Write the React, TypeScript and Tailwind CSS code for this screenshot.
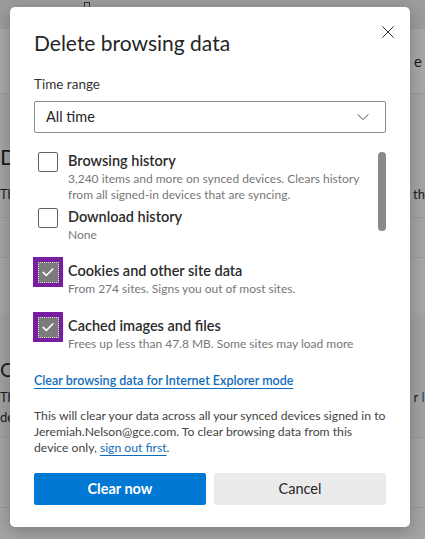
import React from "react";

// ============================================================================
// Delete browsing data dialog (over a dimmed settings page)
// ============================================================================

const font = { fontFamily: 'Lato, "Noto Sans", sans-serif' };

function CheckIcon() {
  return (
    <svg viewBox="0 0 16 16" className="w-[16px] h-[16px]" fill="none">
      <path d="M3.2 8.4l3.1 3.1L12.8 5" stroke="white" strokeWidth="1.7" strokeLinecap="round" strokeLinejoin="round" />
    </svg>
  );
}

interface OptionProps {
  title: string;
  desc: string[];
  checked?: boolean;
}

function Option({ title, desc, checked }: OptionProps) {
  return (
    <div className="flex items-start">
      {checked ? (
        <div className="w-[30px] h-[30px] -ml-[5px] -mt-[4px] mr-[5px] bg-[#7a1ea1] flex items-center justify-center shrink-0">
          <div className="w-[21px] h-[21px] bg-[#7b7b7b] border border-dotted border-[#d8d8d8] flex items-center justify-center">
            <CheckIcon />
          </div>
        </div>
      ) : (
        <div className="w-[20px] h-[20px] mt-[1px] mr-[10px] border border-[#616161] rounded-[2px] bg-white shrink-0" />
      )}
      <div className="flex flex-col">
        <div className="text-[14.5px] leading-[20px] font-semibold text-[#2b2b2b]">{title}</div>
        {desc.map((d) => (
          <div key={d} className="text-[12px] leading-[16px] text-[#777] whitespace-nowrap">
            {d}
          </div>
        ))}
      </div>
    </div>
  );
}

function BackgroundPage() {
  return (
    <div className="absolute inset-0 bg-[#a4a4a4] text-[#1b1b1b]">
      <div className="h-[29px] bg-[#9c9c9c] relative">
        <div className="absolute left-[84px] top-[2px] w-[6px] h-[7px] border border-[#333]" />
      </div>
      <div className="h-[65px] bg-[#a7a7a7] border-b border-[#989898] flex items-center justify-end pr-[3px] text-[15px]">
        e
      </div>
      <div className="h-[124px] border-b border-[#9a9a9a] relative">
        <div className="absolute left-[0px] top-[50px] text-[22px] leading-[26px]">D</div>
        <div className="absolute left-[0px] top-[91px] text-[13px]">Th</div>
        <div className="absolute right-[0px] top-[91px] text-[13px]">th</div>
      </div>
      <div className="h-[40px] border-b border-[#9a9a9a]" />
      <div className="h-[55px] bg-[#a6a6a6]" />
      <div className="h-[125px] bg-[#a1a1a1] border-b border-[#979797] relative">
        <div className="absolute left-[0px] top-[44px] text-[20px] leading-[24px]">
          C<span className="text-[#6b2a1a]">l</span>
        </div>
        <div className="absolute left-[0px] top-[75px] text-[13px]">Th</div>
        <div className="absolute left-[0px] top-[95px] text-[13px]">de</div>
        <div className="absolute right-[0px] top-[75px] text-[13px]">
          r <span className="text-[#1d4f7a]">I</span>
        </div>
      </div>
      <div className="h-[70px] border-b border-[#979797]" />
    </div>
  );
}

export default function App() {
  return (
    <div className="relative w-[425px] h-[539px] overflow-hidden" style={font}>
      <BackgroundPage />

      <div className="absolute left-[10px] top-[7px] w-[400px] h-[520px] bg-white rounded-[5px] shadow-[0_4px_16px_rgba(0,0,0,0.25)] flex flex-col px-[24px]">
        {/* Close */}
        <button className="absolute right-[14px] top-[17px] w-[16px] h-[16px] flex items-center justify-center">
          <svg viewBox="0 0 16 16" className="w-[14px] h-[14px]" fill="none">
            <path d="M1.5 1.5l13 13M14.5 1.5l-13 13" stroke="#333" strokeWidth="1.1" />
          </svg>
        </button>

        {/* Title */}
        <h2 className="mt-[22px] text-[21px] leading-[28px] text-[#262626] font-normal">Delete browsing data</h2>

        {/* Time range */}
        <div className="mt-[18px] text-[13.5px] leading-[18px] text-[#333]">Time range</div>
        <div className="mt-[8px] h-[32px] border border-[#8d8d8d] rounded-[2px] flex items-center justify-between pl-[11px] pr-[15px]">
          <span className="text-[14.5px] text-[#262626]">All time</span>
          <svg viewBox="0 0 16 16" className="w-[14px] h-[14px]" fill="none">
            <path d="M2 5l6 6 6-6" stroke="#444" strokeWidth="1.1" />
          </svg>
        </div>

        {/* Options list */}
        <div className="mt-[18px] relative">
          <div className="absolute right-[0px] top-[1px] w-[8px] h-[79px] rounded-full bg-[#8a8a8a]" />
          <div className="flex flex-col pl-[4px] pr-[20px]">
            <Option
              title="Browsing history"
              desc={["3,240 items and more on synced devices. Clears history", "from all signed-in devices that are syncing."]}
            />
            <div className="h-[4px]" />
            <Option title="Download history" desc={["None"]} />
            <div className="h-[18px]" />
            <Option checked title="Cookies and other site data" desc={["From 274 sites. Signs you out of most sites."]} />
            <div className="h-[19px]" />
            <Option checked title="Cached images and files" desc={["Frees up less than 47.8 MB. Some sites may load more"]} />
          </div>
        </div>

        {/* IE mode link */}
        <a className="mt-[21px] self-start text-[12.5px] leading-[16px] font-semibold text-[#0f6cbd] underline underline-offset-[3px]">
          Clear browsing data for Internet Explorer mode
        </a>

        {/* Sync notice */}
        <p className="mt-[19px] text-[12.2px] leading-[16px] text-[#444] whitespace-nowrap">
          This will clear your data across all your synced devices signed in to
          <br />
          Jeremiah.Nelson@gce.com. To clear browsing data from this
          <br />
          device only, <a className="text-[#0f6cbd] underline underline-offset-[3px]">sign out first</a>.
        </p>

        {/* Actions */}
        <div className="mt-[17px] grid grid-cols-2 gap-[8px]">
          <button className="h-[32px] rounded-[2px] bg-[#0078d4] text-white text-[14.5px] font-bold">Clear now</button>
          <button className="h-[32px] rounded-[2px] bg-[#ebebeb] text-[#262626] text-[14.5px]">Cancel</button>
        </div>
      </div>
    </div>
  );
}
